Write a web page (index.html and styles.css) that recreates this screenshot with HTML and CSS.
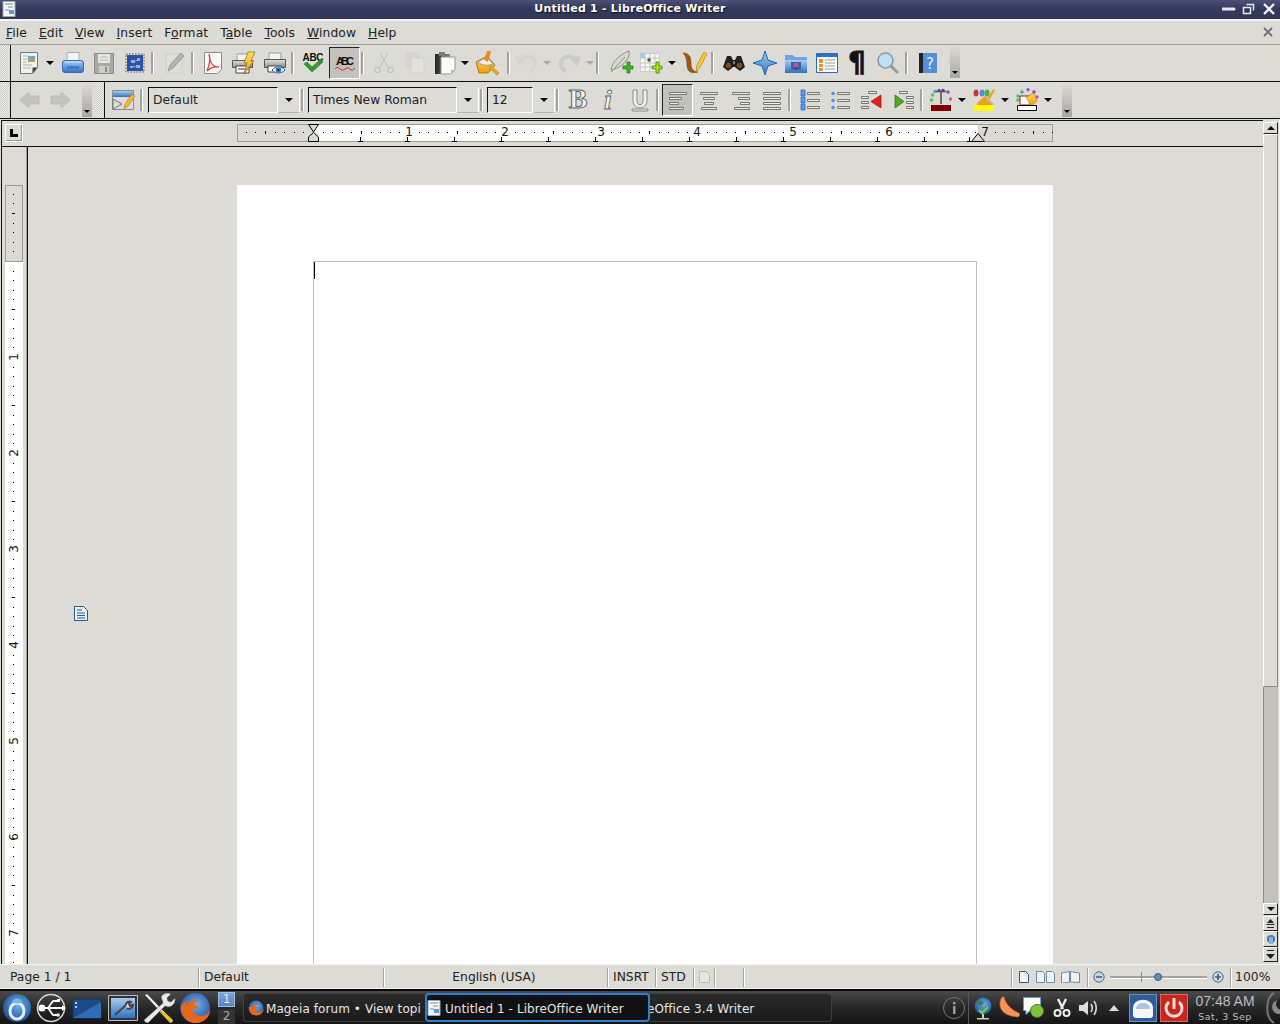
FILE: index.html
```html
<!DOCTYPE html>
<html lang="en">
<head>
<meta charset="utf-8">
<title>Untitled 1 - LibreOffice Writer</title>
<link rel="stylesheet" href="styles.css">
</head>
<body>
<svg class="defs" width="0" height="0" aria-hidden="true">
  <defs>
    <linearGradient id="gBlue" x1="0" y1="0" x2="0" y2="1"><stop offset="0" stop-color="#a9cdf0"/><stop offset="1" stop-color="#2f72c4"/></linearGradient>
    <linearGradient id="gGrey" x1="0" y1="0" x2="0" y2="1"><stop offset="0" stop-color="#e4e4e0"/><stop offset="1" stop-color="#8d8d88"/></linearGradient>
    <linearGradient id="gDark" x1="0" y1="0" x2="1" y2="0"><stop offset="0" stop-color="#222"/><stop offset="1" stop-color="#888"/></linearGradient>
    <linearGradient id="gYel" x1="0" y1="0" x2="0" y2="1"><stop offset="0" stop-color="#ffe14d"/><stop offset="1" stop-color="#f09a10"/></linearGradient>
    <radialGradient id="gFox" cx=".55" cy=".4" r=".6"><stop offset="0" stop-color="#6fb3e8"/><stop offset="1" stop-color="#1d4f9c"/></radialGradient>
    <path id="inch" d="M10 8h1v1h-1zM19 8h1v1h-1zM29 8h1v1h-1zM38 8h1v1h-1zM48 7h1v3h-1zM58 8h1v1h-1zM67 8h1v1h-1zM77 8h1v1h-1zM86 8h1v1h-1z"/>
    <path id="tab" d="M2 13h1v4h2v1H0v-1h2z"/>
    <path id="vinch" d="M8 10h1v1H8zM8 19h1v1H8zM8 29h1v1H8zM8 38h1v1H8zM7 48h3v1H7zM8 58h1v1H8zM8 67h1v1H8zM8 77h1v1H8zM8 86h1v1H8z"/>
  </defs>
</svg>

<header class="title">
  <svg class="title-doc" width="14" height="16" viewBox="0 0 14 16"><path d="M1 .5h12v15H1z" fill="#f4f6f8" stroke="#9aa"/><path d="M3 3h8M6 6h5M3 9h4" stroke="#789"/><path d="M7 9h5v4H7z" fill="#5a9bd8"/></svg>
  <span class="title-text">Untitled 1 - LibreOffice Writer</span>
  <div class="title-btns">
    <svg width="14" height="14" viewBox="0 0 14 14"><path d="M1 7h11" stroke="#e8e8ec" stroke-width="3" stroke-linecap="round"/></svg>
    <svg width="14" height="14" viewBox="0 0 14 14"><path d="M4.500 2.500h7v6M1.500 5.500h7v6h-7z" fill="none" stroke="#e8e8ec" stroke-width="1.500"/></svg>
    <svg width="14" height="14" viewBox="0 0 14 14"><path d="M2 2l10 10M12 2L2 12" stroke="#f2f2f4" stroke-width="2.400"/></svg>
  </div>
</header>

<nav class="menu">
  <span><u>F</u>ile</span><span><u>E</u>dit</span><span><u>V</u>iew</span><span><u>I</u>nsert</span><span>F<u>o</u>rmat</span><span>T<u>a</u>ble</span><span><u>T</u>ools</span><span><u>W</u>indow</span><span><u>H</u>elp</span>
  <svg class="menu-x" width="12" height="12" viewBox="0 0 12 12"><path d="M2 2l8 8M10 2l-8 8" stroke="#66707c" stroke-width="1.800"/></svg>
</nav>

<section class="bar bar1">
  <div class="grip"></div>
  <div class="bar-line"></div>
  <div class="tools pad5">
    <button class="b w26"><svg width="24" height="24" viewBox="0 0 24 24"><path d="M3.500 1.500h17v15l-5 6h-12z" fill="#f3f3ee" stroke="#777"/><path d="M6 5h5M6 8h4M6 11h3M6 14h9M6 17h8" stroke="#aab"/><path d="M11 5h7v6h-7z" fill="#6fa8dc"/><path d="M11 9h7v2h-7z" fill="#c9a227"/><path d="M15.500 22.500v-6h5z" fill="#444"/></svg></button>
    <button class="b w15"><i class="drop"></i></button>
    <button class="b w31"><svg width="24" height="24" viewBox="0 0 24 24"><path d="M6 1.500h12v9H6z" fill="#f6f6f6" stroke="#aaa"/><rect x="1.500" y="9.500" width="21" height="12" rx="2.500" fill="url(#gBlue)" stroke="#2d6cb8"/><path d="M4 11h16" stroke="#cfe3f7"/><path d="M6 15h12v3H6z" fill="#3a7ccb"/></svg></button>
    <button class="b w31"><svg width="24" height="24" viewBox="0 0 24 24"><path d="M2.500 2.500h19v20h-19z" fill="#a9a9a4" stroke="#8e8e89"/><path d="M6 3h12v9H6z" fill="#e5e5e1"/><path d="M8 6h8M8 9h8" stroke="#bbb"/><path d="M7 15h10v7H7z" fill="#cfcfca"/><path d="M13 16h2v5h-2z" fill="#8e8e89"/></svg></button>
    <button class="b w31"><svg width="24" height="24" viewBox="0 0 24 24"><path d="M3.500 3.500h17v17h-17z" fill="#2d51a6" stroke="#ddd"/><path d="M3 3h18v18H3z" fill="none" stroke="#555" stroke-dasharray="1.500 1.500"/><path d="M8 9h4v3H8zM14 7h3v3h-3zM13 14h4v3h-4zM7 15h3v2H7z" fill="#8db0e4"/><path d="M10 12l4-3M10 15l3 1" stroke="#8db0e4"/></svg></button>
    <i class="sep"></i>
    <button class="b w32"><svg width="24" height="24" viewBox="0 0 24 24"><path d="M4 3h16v19H4z" fill="#dfdfda" stroke="#cfcfca"/><path d="M6 20l2-6L19 2l3 3L11 17z" fill="#b5b5b0" stroke="#9d9d98"/></svg></button>
    <i class="sep w7"></i>
    <button class="b w31"><svg width="24" height="24" viewBox="0 0 24 24"><path d="M3.500 1.500h17v17l-4 4h-13z" fill="#fafafa" stroke="#8a8a8a"/><path d="M8 3c1 8 3 13 10 13-6-1-10 2-12 4 2-5 4-12 2-17z" fill="none" stroke="#e03c3c" stroke-width="1.300"/></svg></button>
    <button class="b w31"><svg width="24" height="24" viewBox="0 0 24 24"><path d="M5 3h12v7H5z" fill="#f2f2f2" stroke="#999"/><path d="M.5 9.500h20v7H.5z" fill="url(#gGrey)" stroke="#555"/><path d="M4 15h13v7H4z" fill="#fff" stroke="#444"/><path d="M6 18h10" stroke="#333"/><path d="M16 1h7l-4 9h3L12 23l3-11h-3z" fill="url(#gYel)" stroke="#7a5a14" stroke-width=".6"/></svg></button>
    <button class="b w31"><svg width="24" height="24" viewBox="0 0 24 24"><path d="M6 2h12v7H6z" fill="#f2f2f2" stroke="#999"/><path d="M1.500 8.500h21v8h-21z" fill="url(#gGrey)" stroke="#555"/><path d="M5 15h14v6H5z" fill="#fff" stroke="#444"/><path d="M9 19c3-4 10-4 13 0-3 4-10 4-13 0z" fill="#e8f0f8" stroke="#35699d"/><circle cx="15.500" cy="19" r="2.800" fill="#2f7fc1"/><circle cx="15.500" cy="19" r="1.100" fill="#123"/></svg></button>
    <i class="sep w7"></i>
    <button class="b w32"><svg width="24" height="24" viewBox="0 0 24 24"><text x="12" y="10" class="abc" textLength="21">ABC</text><path d="M3 13l3-2 5 5 9-8 2 3-11 10z" fill="#2f9a2f" stroke="#1c6a1c" stroke-width=".5"/></svg></button>
    <button class="b w31 on"><svg width="24" height="24" viewBox="0 0 24 24"><text x="12" y="14" class="abc2" textLength="18">ABC</text><path d="M2 18c2-2 3-2 5 0s3 1 5 0 3-2 5 0 3 1 5-1" fill="none" stroke="#d01818"/></svg></button>
    <i class="sep"></i>
    <button class="b w31"><svg width="24" height="24" viewBox="0 0 24 24"><path d="M16 2L8 16M8 2l8 14" stroke="#c4c4be" stroke-width="1.200"/><circle cx="5.500" cy="19" r="2.800" fill="none" stroke="#b8b8b2"/><circle cx="18.500" cy="19" r="2.800" fill="none" stroke="#b8b8b2"/></svg></button>
    <button class="b w31"><svg width="24" height="24" viewBox="0 0 24 24"><path d="M3 2h13v15H3z" fill="#d6d5d0" stroke="#cfcec9"/><path d="M8 7h13v15H8z" fill="#e2e1dc" stroke="#d2d1cc"/></svg></button>
    <button class="b w30"><svg width="24" height="24" viewBox="0 0 24 24"><path d="M2 3h15v20H2z" fill="url(#gDark)"/><path d="M6 1h6v4H6z" fill="#777"/><path d="M8 6h14v13l-4 4H8z" fill="#fbfbf8" stroke="#999"/><path d="M18 23v-4h4z" fill="#bbb"/></svg></button>
    <button class="b w10"><i class="drop"></i></button>
    <button class="b w36"><svg width="24" height="24" viewBox="0 0 24 24"><path d="M0 11l11-6 8 9-7 8H3z" fill="url(#gYel)" stroke="#b87a10"/><path d="M2 11l9-5 6 7c-5 2-11 2-15-2z" fill="#f1f1f1" stroke="#999"/><path d="M8 9l3-9h4l-3 11z" fill="#f08a1d"/><path d="M15 15l8 7-2 2-8-7z" fill="#f2a81d" stroke="#a66d10" stroke-width=".5"/></svg></button>
    <i class="sep w7"></i>
    <button class="b w26"><svg width="24" height="24" viewBox="0 0 24 24"><path d="M6 9c6-7 15-3 15 4 0 3-2 6-5 7" fill="none" stroke="#d5d4cf" stroke-width="4"/><path d="M1 5l11 2-7 9z" fill="#d5d4cf"/></svg></button>
    <button class="b w16"><i class="drop pale"></i></button>
    <button class="b w30"><svg width="24" height="24" viewBox="0 0 24 24"><path d="M18 9C12 2 3 6 3 13c0 3 2 6 5 7" fill="none" stroke="#cbcac5" stroke-width="4"/><path d="M23 5l-11 2 7 9z" fill="#cbcac5"/></svg></button>
    <button class="b w10"><i class="drop pale"></i></button>
    <i class="sep w9"></i>
    <button class="b w34"><svg width="24" height="24" viewBox="0 0 24 24"><path d="M2 19C3 10 12 3 20 0c1 7-4 14-14 18z" fill="#d8d8d3" stroke="#8f8f8a"/><path d="M2 21L16 6" stroke="#8f8f8a"/><path d="M14 15h4v-4h3v4h3v3h-3v4h-3v-4h-4z" fill="#3cb521" stroke="#1d7a10" stroke-width=".7"/></svg></button>
    <button class="b w26"><svg width="24" height="24" viewBox="0 0 24 24"><path d="M1.500 2.500h19v18h-19z" fill="#f7f7f3" stroke="#ccc"/><path d="M6 2v18M11 2v18M16 2v18M1 7h20M1 12h20M1 16h20" stroke="#c4c4c0"/><path d="M1 2h5v5H1z" fill="#a6c5ef"/><path d="M8 9h4M10 7v4" stroke="#222"/><path d="M13 15h4v-4h3v4h3v3h-3v4h-3v-4h-4z" fill="#9fe01c" stroke="#2f7a10" stroke-width=".7"/></svg></button>
    <button class="b w16"><i class="drop"></i></button>
    <button class="b w30"><svg width="24" height="24" viewBox="0 0 24 24"><path d="M0 2c7 0 8 5 8 11 0 5 3 8 7 8-6 2-11 0-11-7 0-5-1-9-4-12z" fill="#a65314" stroke="#6d3509" stroke-width=".5"/><path d="M13 21l1-7 7-13 3 2-7 13z" fill="#f7c93a" stroke="#b58613" stroke-width=".7"/></svg></button>
    <i class="sep"></i>
    <button class="b w32"><svg width="24" height="24" viewBox="0 0 24 24"><path d="M5 5h4l2 4h2l2-4h4l4 11-5 4-5-4h-2l-5 4-5-4z" fill="#222"/><circle cx="6.500" cy="14.500" r="3.500" fill="#7a4a20" stroke="#111"/><circle cx="17.500" cy="14.500" r="3.500" fill="#7a4a20" stroke="#111"/><path d="M11 10h2v3h-2z" fill="#777"/></svg></button>
    <button class="b w30"><svg width="24" height="24" viewBox="0 0 24 24"><path d="M12 0l3 9 9 3-9 3-3 9-3-9-9-3 9-3z" fill="url(#gBlue)" stroke="#2368b8"/></svg></button>
    <button class="b w32"><svg width="24" height="24" viewBox="0 0 24 24"><path d="M1 4h8l2 2h12v16H1z" fill="#6ea6e2"/><path d="M1 9h22v13H1z" fill="url(#gBlue)"/><path d="M7 11h10v8H7z" fill="#3b5ea8"/><circle cx="12" cy="14" r="2.500" fill="#c04fa0"/><path d="M12 16v3" stroke="#5a2a10"/></svg></button>
    <button class="b w30"><svg width="24" height="24" viewBox="0 0 24 24"><path d="M1.500 2.500h21v19h-21z" fill="#fbfbfb" stroke="#2668bf"/><path d="M2 3h20v3H2z" fill="#2d73cc"/><path d="M4 8h4v4H4zM4 13h4v3H4zM4 17h4v3H4z" fill="#ef8c22"/><path d="M10 9h10M10 12h10M10 15h10M10 18h10" stroke="#999"/></svg></button>
    <button class="b w30"><svg width="24" height="24" viewBox="0 0 24 24"><text x="12" y="21" class="pil">¶</text></svg></button>
    <button class="b w32"><svg width="24" height="24" viewBox="0 0 24 24"><circle cx="9.500" cy="9.500" r="7.500" fill="#bfe0f4" stroke="#8a9aa4" stroke-width="1.600"/><path d="M15 15l7 7" stroke="#9a9a94" stroke-width="3"/></svg></button>
    <i class="sep w9"></i>
    <button class="b w30"><svg width="24" height="24" viewBox="0 0 24 24"><path d="M3 2h18v20H3z" fill="#4f8fdb"/><path d="M3 2h4v20H3z" fill="#222"/><text x="14" y="18" class="qm">?</text></svg></button>
    <div class="over"><i class="drop"></i></div>
  </div>
</section>

<section class="bar bar2">
  <div class="grip"></div>
  <div class="bar-line"></div>
  <div class="nav-tools">
    <button class="b w30 ml4"><svg width="24" height="24" viewBox="0 0 24 24"><path d="M2 12l9-8v4h10v8H11v4z" fill="#c4c4be" stroke="#bbbbb5"/></svg></button>
    <button class="b w30"><svg width="24" height="24" viewBox="0 0 24 24"><path d="M22 12l-9-8v4H3v8h10v4z" fill="#c4c4be" stroke="#bbbbb5"/></svg></button>
    <div class="over tall"><i class="drop"></i></div>
  </div>
  <div class="grip"></div>
  <div class="bar-line"></div>
  <div class="tools pad2">
    <button class="b w32"><svg width="24" height="24" viewBox="0 0 24 24"><path d="M1.500 2.500h21v19h-21z" fill="#dcdcd8" stroke="#8a8a88"/><path d="M2 3h20v6H2z" fill="url(#gBlue)"/><path d="M2 11l9 5-9 5zM13 18h4" stroke="#777" fill="none"/><path d="M13 21l1-5 7-10 3 2-7 10z" fill="#f5b921" stroke="#a67a10" stroke-width=".6"/></svg></button>
    <i class="sep w9"></i>
    <div class="combo w152"><span class="field">Default</span><span class="arrow"><i class="drop"></i></span></div>
    <i class="sep"></i>
    <div class="combo w171"><span class="field flat">Times New Roman</span><span class="arrow"><i class="drop"></i></span></div>
    <i class="sep"></i>
    <div class="combo w68"><span class="field">12</span><span class="arrow"><i class="drop"></i></span></div>
    <i class="sep w7"></i>
    <button class="b w31"><svg width="24" height="24" viewBox="0 0 24 24"><text x="12" y="20" class="fmt-b">B</text></svg></button>
    <button class="b w31"><svg width="24" height="24" viewBox="0 0 24 24"><text x="11" y="21" class="fmt-i">i</text></svg></button>
    <button class="b w31"><svg width="24" height="24" viewBox="0 0 24 24"><path d="M5 2h4v11c0 5 6 5 6 0V2h4v11c0 9-14 9-14 0zM4 21h16v2H4z" fill="#eee" stroke="#8a8a86"/></svg></button>
    <i class="sep w7"></i>
    <button class="b w31 on"><svg width="24" height="24" viewBox="0 0 24 24"><path class="ln" d="M3.500 4.500h17v2h-17zM3.500 9.500h12v2h-12zM3.500 14.500h9v2h-9zM3.500 19.500h14v2h-14z"/></svg></button>
    <button class="b w32"><svg width="24" height="24" viewBox="0 0 24 24"><path class="ln" d="M3.500 4.500h17v2h-17zM6.500 9.500h11v2h-11zM7.500 14.500h9v2h-9zM4.500 19.500h15v2h-15z"/></svg></button>
    <button class="b w32"><svg width="24" height="24" viewBox="0 0 24 24"><path class="ln" d="M3.500 4.500h17v2h-17zM9.500 9.500h11v2h-11zM11.500 14.500h9v2h-9zM5.500 19.500h15v2h-15z"/></svg></button>
    <button class="b w30"><svg width="24" height="24" viewBox="0 0 24 24"><path class="ln" d="M3.500 4.500h17v2h-17zM3.500 9.500h17v2h-17zM3.500 14.500h17v2h-17zM3.500 19.500h17v2h-17z"/></svg></button>
    <i class="sep w7"></i>
    <button class="b w31"><svg width="24" height="24" viewBox="0 0 24 24"><path class="ln" d="M9.500 4.500h12v2h-12zM9.500 11.500h12v2h-12zM9.500 18.500h12v2h-12z"/><path d="M3 2h4v6H3zM3 9h4v6H3zM3 16h4v6H3z" fill="#5a9ae8" stroke="#2a6ec6" stroke-width=".8"/></svg></button>
    <button class="b w31"><svg width="24" height="24" viewBox="0 0 24 24"><path class="ln" d="M8.500 4.500h12v2h-12zM8.500 11.500h12v2h-12zM8.500 18.500h12v2h-12z"/><circle cx="4" cy="5.500" r="1.800" fill="#4a90e8"/><circle cx="4" cy="12.500" r="1.800" fill="#4a90e8"/><circle cx="4" cy="19.500" r="1.800" fill="#4a90e8"/></svg></button>
    <button class="b w32"><svg width="24" height="24" viewBox="0 0 24 24"><path class="ln" d="M8.500 3.500h8v2h-8zM1.500 8.500h7v2h-7zM1.500 13.500h7v2h-7zM1.500 18.500h7v2h-7z"/><path d="M21 7v13l-10-6.500z" fill="#e42020" stroke="#901010" stroke-width=".7"/></svg></button>
    <button class="b w31"><svg width="24" height="24" viewBox="0 0 24 24"><path class="ln" d="M7.500 3.500h8v2h-8zM14.500 8.500h7v2h-7zM14.500 13.500h7v2h-7zM14.500 18.500h7v2h-7z"/><path d="M3 7v13l9-6.500z" fill="#54a81e" stroke="#2d6b0c" stroke-width=".7"/></svg></button>
    <i class="sep w7"></i>
    <button class="b w30"><svg width="24" height="24" viewBox="0 0 24 24"><circle cx="2.500" cy="12" r="1.700" fill="#48c848"/><circle cx="3.500" cy="7" r="1.700" fill="#48b888"/><circle cx="6" cy="3.500" r="1.700" fill="#38b0b0"/><circle cx="10" cy="2.500" r="1.700" fill="#3858c8"/><circle cx="14" cy="2.500" r="1.700" fill="#5838c8"/><circle cx="19" cy="4" r="1.700" fill="#a038c0"/><circle cx="21.500" cy="11" r="1.700" fill="#e050a0"/><path d="M7 3.500h10M12 3v13" stroke="#555" stroke-width="1.600"/><path d="M2 17h20v6H2z" fill="#800000"/></svg></button>
    <button class="b w12"><i class="drop"></i></button>
    <button class="b w32"><svg width="24" height="24" viewBox="0 0 24 24"><ellipse cx="4" cy="5" rx="2.500" ry="3.500" fill="#d83030"/><ellipse cx="10" cy="5" rx="2.500" ry="3.500" fill="#4a8ee0"/><ellipse cx="15" cy="5" rx="2.500" ry="3.500" fill="#48b048"/><path d="M21 1l2 1-6 11-3-1z" fill="#f0a820"/><path d="M6 14l7-6 8 8v3H4z" fill="#f0a020"/><path d="M15 10l7 7" stroke="#bbb" stroke-width="2"/><path d="M2 17h20v6H2z" fill="#ffff00"/></svg></button>
    <button class="b w10"><i class="drop"></i></button>
    <button class="b w34"><svg width="24" height="24" viewBox="0 0 24 24"><circle cx="3" cy="8" r="1.700" fill="#48c848"/><circle cx="3" cy="12" r="1.700" fill="#48c848"/><circle cx="7" cy="4" r="1.700" fill="#30b0b0"/><circle cx="13" cy="1.800" r="1.700" fill="#5878d0"/><circle cx="19" cy="4" r="1.700" fill="#a038c0"/><circle cx="22" cy="9" r="1.700" fill="#d050b0"/><path d="M5 8h10v9H5z" fill="#fff" stroke="#a01010"/><path d="M3 19c4 2 8 3 10 3" stroke="#b01010" stroke-width="2"/><path d="M11 9l8-4 3 8-6 5z" fill="url(#gYel)" stroke="#a67a10" stroke-width=".6"/><path d="M2.500 17.500h19v5h-19z" fill="#fff" stroke="#000"/></svg></button>
    <button class="b w8"><i class="drop"></i></button>
    <div class="over tall sm"><i class="drop"></i></div>
  </div>
</section>

<main class="work">
  <div class="left">
    <div class="rrow">
      <div class="corner"><svg width="10" height="10" viewBox="0 0 10 10"><path d="M1 1h3v5h5v3H1z" fill="#000"/></svg></div>
      <svg class="hruler" width="816" height="18" viewBox="0 0 816 18">
        <rect x=".5" y=".5" width="815" height="17" fill="#dbdad5" stroke="#9c9b96"/>
        <rect x="77" y="1" width="664" height="16" fill="#fff"/>
        <use href="#inch" x="-20"/>
        <use href="#inch" x="76"/><use href="#inch" x="172"/><use href="#inch" x="268"/><use href="#inch" x="364"/><use href="#inch" x="460"/><use href="#inch" x="556"/><use href="#inch" x="652"/><use href="#inch" x="748"/>
        <text x="172" y="12" class="rnum">1</text><text x="268" y="12" class="rnum">2</text><text x="364" y="12" class="rnum">3</text><text x="460" y="12" class="rnum">4</text><text x="556" y="12" class="rnum">5</text><text x="652" y="12" class="rnum">6</text><text x="748" y="12" class="rnum">7</text>
        <use href="#tab" x="121"/><use href="#tab" x="168"/><use href="#tab" x="215"/><use href="#tab" x="262"/><use href="#tab" x="309"/><use href="#tab" x="356"/><use href="#tab" x="403"/><use href="#tab" x="450"/><use href="#tab" x="497"/><use href="#tab" x="544"/><use href="#tab" x="591"/><use href="#tab" x="638"/><use href="#tab" x="685"/><use href="#tab" x="730"/>
        <path d="M71.500 .5h10l-5 7.500zM76.500 8.500l5 4.500v4.500h-10V13z" fill="#dbdad5" stroke="#000"/>
        <path d="M734.500 17.500l6.500-8 6.500 8z" fill="#dbdad5" stroke="#000"/>
      </svg>
    </div>
    <div class="lower">
      <div class="vcol">
        <svg class="vruler" width="18" height="779" viewBox="0 0 18 779">
          <rect x="0" y="0" width="18" height="779" fill="#fff"/>
          <rect x=".5" y=".5" width="17" height="76" fill="#dbdad5" stroke="#9c9b96"/>
          <use href="#vinch" y="-20"/><use href="#vinch" y="76"/><use href="#vinch" y="172"/><use href="#vinch" y="268"/><use href="#vinch" y="364"/><use href="#vinch" y="460"/><use href="#vinch" y="556"/><use href="#vinch" y="652"/><use href="#vinch" y="748"/>
          <text transform="translate(13 172) rotate(-90)" class="rnum">1</text>
          <text transform="translate(13 268) rotate(-90)" class="rnum">2</text>
          <text transform="translate(13 364) rotate(-90)" class="rnum">3</text>
          <text transform="translate(13 460) rotate(-90)" class="rnum">4</text>
          <text transform="translate(13 556) rotate(-90)" class="rnum">5</text>
          <text transform="translate(13 652) rotate(-90)" class="rnum">6</text>
          <text transform="translate(13 748) rotate(-90)" class="rnum">7</text>
        </svg>
      </div>
      <div class="doc">
        <div class="page">
          <div class="margins"><i class="cursor"></i></div>
        </div>
        <svg class="navicon" width="16" height="16" viewBox="0 0 16 16"><path d="M1.500 .5h9l4 4v10h-13z" fill="#e8f1f8" stroke="#1f5f8f"/><path d="M4 4h5M4 7h8M4 9.500h8M4 12h8" stroke="#1f5f8f"/></svg>
      </div>
    </div>
  </div>
  <aside class="sbar">
    <div class="sb-btn top"><i class="up"></i></div>
    <div class="thumb"></div>
    <div class="trough"></div>
    <div class="sb-btn"><i class="down"></i></div>
    <div class="sb-nav"><svg width="9" height="9" viewBox="0 0 9 9"><path d="M4.500 0l3.500 4H1zM0 5h9L8 6H1zM1 8h7v1H1z" fill="#222"/></svg></div>
    <div class="sb-nav tall16"><svg width="10" height="10" viewBox="0 0 10 10"><circle cx="5" cy="5" r="4" fill="#3f78b0"/><path d="M3 3h4v7H3z" fill="#8fb4d8"/></svg></div>
    <div class="sb-nav"><svg width="9" height="9" viewBox="0 0 9 9"><path d="M1 0h7v1H1zM0 4h9L4.500 9z" fill="#222"/></svg></div>
  </aside>
</main>

<footer class="status">
  <span class="cell w198 first">Page 1 / 1</span>
  <span class="cell w185">Default</span>
  <span class="cell w224 center">English (USA)</span>
  <span class="cell w48">INSRT</span>
  <span class="cell w38">STD</span>
  <span class="cell w21"><svg width="11" height="12" viewBox="0 0 11 12"><path d="M.5 .5h7l3 3v8H.5z" fill="#e8e8e3" stroke="#bcbcb6"/></svg></span>
  <span class="cell w29"></span>
  <span class="cell w268"></span>
  <span class="cell w76 views">
    <svg width="13" height="12" viewBox="0 0 13 12"><path d="M2.500 .5h6l3 3v8h-9z" fill="#eef4fa" stroke="#1f5a92"/></svg>
    <svg width="19" height="12" viewBox="0 0 19 12"><path d="M.5 .5h6l2 2v9h-8zM10.500 .5h6l2 2v9h-8z" fill="#eef2f6" stroke="#6f8ba6"/></svg>
    <svg width="19" height="12" viewBox="0 0 19 12"><path d="M.5 2l8-1.500v11l-8 .5zM9.500 .5l9 1.500v9.500l-9-.5z" fill="#eef2f6" stroke="#6f8ba6"/></svg>
  </span>
  <span class="cell w143 zoom">
    <svg width="12" height="12" viewBox="0 0 12 12"><circle cx="6" cy="6" r="5.200" fill="#c6d6e4" stroke="#3f6f98"/><path d="M3 6h6" stroke="#123c60" stroke-width="1.200"/></svg>
    <span class="slider"><i class="mid"></i><i class="knob"></i></span>
    <svg width="12" height="12" viewBox="0 0 12 12"><circle cx="6" cy="6" r="5.200" fill="#c6d6e4" stroke="#3f6f98"/><path d="M3 6h6M6 3v6" stroke="#123c60" stroke-width="1.200"/></svg>
  </span>
  <span class="cell pct">100%</span>
</footer>

<footer class="task">
  <div class="lz w34"><svg width="30" height="30" viewBox="0 0 30 30"><circle cx="15" cy="15" r="14" fill="url(#gFox)"/><ellipse cx="15" cy="18" rx="7" ry="8" fill="none" stroke="#e4eef8" stroke-width="3"/><path d="M10 9c2-5 8-5 10 0-3 2-7 2-10 0z" fill="#7fb4e6"/></svg></div>
  <div class="lz w34"><svg width="30" height="30" viewBox="0 0 30 30"><circle cx="15" cy="15" r="13.500" fill="none" stroke="#d8d8d8" stroke-width="1.500"/><path d="M3 15h24M12 15l5-7h5M12 15l5 7h4" stroke="#fff" stroke-width="1.800" fill="none"/><circle cx="6" cy="15" r="3.500" fill="#fff"/><path d="M26 12l4 3-4 3z" fill="#fff"/><path d="M21 6h3v3h-3z" fill="#fff"/><circle cx="22" cy="22" r="1.800" fill="#fff"/></svg></div>
  <div class="lz w37"><svg width="30" height="24" viewBox="0 0 30 24"><path d="M1 3h28v19H1z" fill="#1e4a86" stroke="#16345c"/><path d="M1 22L29 6v16z" fill="#2f6cb6"/><path d="M3 6h2v2H3zM3 10h2v2H3z" fill="#bcd"/></svg></div>
  <div class="lz w35"><svg width="30" height="26" viewBox="0 0 30 26"><path d="M.5 .5h29v25H.5z" fill="#333" stroke="#bbb"/><path d="M3 3h24v20H3z" fill="url(#gBlue)"/><path d="M7 20l11-10M18 10c0-3 3-4 5-3l-2 2 1 2 3-1c0 3-4 5-6 3" stroke="#444" stroke-width="2" fill="#ddd"/></svg></div>
  <div class="lz w37"><svg width="32" height="32" viewBox="0 0 32 32"><path d="M2 3l2-1 26 27-2 2z" fill="#eee"/><path d="M19 18l11 10-3 3-10-11z" fill="#f0c020"/><path d="M2 30l-1-2 19-17-2-6c2-4 7-5 10-3l-4 4 1 3 3 1 4-4c1 4-2 9-7 9l-3-1L5 31z" fill="#e8e8e8" stroke="#555" stroke-width=".6"/></svg></div>
  <div class="lz w36"><svg width="32" height="32" viewBox="0 0 32 32"><circle cx="16" cy="16" r="15" fill="url(#gFox)"/><path d="M2 14C1 24 8 31 17 31c8 0 14-6 14-13-2 4-5 6-9 6-5 0-8-3-8-7 2-1 4-1 6 0 0-3-3-4-5-4 0-2 2-4 5-5-6-1-11 2-12 6-1-2-1-4 0-6-3 2-5 4-6 6z" fill="#e8661a"/></svg></div>
  <div class="pager"><span class="pg on">1</span><span class="pg">2</span></div>
  <div class="tasks">
    <div class="tk w182 first-task"><svg width="16" height="16" viewBox="0 0 32 32"><circle cx="16" cy="16" r="15" fill="url(#gFox)"/><path d="M2 14C1 24 8 31 17 31c8 0 14-6 14-13-2 4-5 6-9 6-5 0-8-3-8-7 2-1 4-1 6 0 0-3-3-4-5-4 0-2 2-4 5-5-6-1-11 2-12 6z" fill="#e8661a"/></svg><span>Mageia forum • View topi</span></div>
    <div class="tk act"><svg width="14" height="16" viewBox="0 0 14 16"><path d="M1 .5h12v15H1z" fill="#f4f6f8" stroke="#9aa"/><path d="M3 3h8M6 6h5M3 9h4" stroke="#789"/><path d="M7 9h5v4H7z" fill="#5a9bd8"/></svg><span>Untitled 1 - LibreOffice Writer</span></div>
    <div class="tk w182 last"><span>eOffice 3.4 Writer</span></div>
  </div>
  <div class="tray">
    <div class="lz w28"><svg width="24" height="24" viewBox="0 0 24 24"><circle cx="12" cy="12" r="10.500" fill="none" stroke="#777"/><path d="M11 10h2.500v8H11zM11 6h2.500v2.500H11z" fill="#999"/></svg></div>
    <div class="lz w28 bl"><svg width="24" height="24" viewBox="0 0 24 24"><circle cx="12" cy="10" r="8.500" fill="url(#gFox)"/><path d="M7 5c3-1 5 0 6 2l-3 3-3-1zM14 11l4 1-2 4z" fill="#3c7f48"/><path d="M8 14l3 3 6-6" stroke="#5ee03c" stroke-width="2.200" fill="none"/><path d="M6 22h12v1.500H6zM11 18h2v4h-2z" fill="#ccc"/></svg></div>
    <div class="lz w24"><svg width="24" height="24" viewBox="0 0 24 24"><path d="M6 1C1 9 4 20 22 21c2-1 2-3 1-4C16 14 10 9 8 1z" fill="#f4945a" stroke="#b85a28" stroke-width=".6"/></svg></div>
    <div class="lz w28"><svg width="24" height="24" viewBox="0 0 24 24"><path d="M1.500 1.500h17v13H8l-4 4v-4H1.500z" fill="#fff" stroke="#6a9ed6"/><circle cx="15" cy="15" r="6.500" fill="#7cc43c" stroke="#3d7a18"/></svg></div>
    <div class="lz w28"><svg width="18" height="20" viewBox="0 0 18 20"><path d="M5 1l5 10M13 1L8 11" stroke="#eee" stroke-width="2.400"/><circle cx="4.500" cy="15" r="3" fill="none" stroke="#eee" stroke-width="2"/><circle cx="13.500" cy="15" r="3" fill="none" stroke="#eee" stroke-width="2"/></svg></div>
    <div class="lz w24"><svg width="20" height="20" viewBox="0 0 20 20"><path d="M1 7h4l5-4v14l-5-4H1z" fill="#ddd"/><path d="M13 6c1.500 2.500 1.500 5.500 0 8M16 3c3 4 3 10 0 14" stroke="#ddd" stroke-width="1.600" fill="none"/></svg></div>
    <div class="lz w28"><svg width="12" height="8" viewBox="0 0 12 8"><path d="M6 1l5 6H1z" fill="#ddd"/></svg></div>
    <div class="lz w30"><svg width="28" height="28" viewBox="0 0 28 28"><rect x=".5" y=".5" width="27" height="27" fill="#2f5c9a" stroke="#6a8fc0"/><path d="M4 14C4 3 24 3 24 14v7c0 2-1 3-3 3H7c-2 0-3-1-3-3z" fill="#f6f6f6"/><path d="M7 15c0-8 14-8 14 0z" fill="#a8c4e4"/></svg></div>
    <div class="lz w32"><svg width="28" height="28" viewBox="0 0 28 28"><rect x=".5" y=".5" width="27" height="27" fill="#c5281c" stroke="#e06a60"/><path d="M9 8a8 8 0 1 0 10 0" fill="none" stroke="#f6d8d0" stroke-width="3"/><path d="M12.500 4h3v11h-3z" fill="#f6d8d0"/></svg></div>
    <div class="clock"><span class="time">07:48 AM</span><span class="date">Sat, 3 Sep</span></div>
    <div class="lz w20"><svg width="20" height="34" viewBox="0 0 20 34"><path d="M14 2C6 6 4 26 14 32" fill="none" stroke="#777" stroke-width="2"/><circle cx="19" cy="16" r="7" fill="#8a8a8a"/><circle cx="22" cy="13" r="6" fill="#222"/></svg></div>
  </div>
</footer>
</body>
</html>
```
FILE: styles.css
```css
* { box-sizing: border-box; }
html, body { margin: 0; padding: 0; }
body {
  width: 1280px; height: 1024px; overflow: hidden;
  display: flex; flex-direction: column;
  background: #dcdbd6; color: #000;
  font: 12.3px "DejaVu Sans", sans-serif;
  position: relative;
}
.defs { position: absolute; }
button { all: unset; box-sizing: border-box; }
i { display: block; font-style: normal; }

.title {
  height: 21px; flex: none; position: relative;
  background: linear-gradient(#4a5079, #343a5c 45%, #2f3554);
  border-bottom: 2px solid #f4f4f4;
  color: #fff; font-weight: bold; font-size: 11px;
  display: flex; align-items: center; justify-content: center;
  padding: 0 20px 3px 0;
}
.title-text { text-shadow: 1px 1px 1px #111; letter-spacing: .2px; }
.title-doc { position: absolute; left: 2px; top: 1px; }
.title-btns { position: absolute; right: 4px; top: 2px; display: flex; gap: 6px; }

.menu {
  height: 24px; flex: none; display: flex; align-items: center; gap: 12px;
  padding-left: 6px; border-bottom: 1px solid #a09f99; position: relative;
  color: #222; letter-spacing: .08px;
}
.menu-x { position: absolute; right: 6px; top: 5px; }

.bar {
  height: 37px; flex: none; display: flex; align-items: stretch;
  border-bottom: 1px solid #111;
}
.grip {
  width: 9px; margin-left: 1px; flex: none;
  background: repeating-conic-gradient(#c9c8c3 0 25%, #f2f1ec 0 50%) 0 0 / 2px 2px;
}
.bar-line { width: 1px; background: #111; flex: none; }
.tools { display: flex; align-items: center; flex: 1; min-width: 0; }
.pad5 { padding-left: 5px; }
.pad2 { padding-left: 2px; }
.nav-tools { width: 83px; flex: none; display: flex; align-items: center; }
.ml4 { margin-left: 4px; }

.b { height: 30px; display: flex; align-items: center; justify-content: center; flex: none; }
.b svg { display: block; overflow: visible; }
.on { background: #c2c1bb; border: 1px solid; border-color: #222 #fff #fff #222; }
.b.on { height: 32px; }
.sep { width: 8px; height: 22px; flex: none; position: relative; }
.sep::before { content: ""; position: absolute; left: 1px; top: 0; bottom: 0; width: 3px; background: linear-gradient(90deg, #a3a29c 66%, #fff 66%); }
.drop { width: 0; height: 0; border: 4px solid transparent; border-top-color: #000; border-bottom: 0; }
.drop.pale { border-top-color: #aaa9a4; }
.over {
  width: 10px; height: 33px; margin-left: 7px; flex: none;
  background: linear-gradient(#dcdbd6, #a8a7a2);
  display: flex; align-items: flex-end; justify-content: center; padding-bottom: 4px;
  align-self: flex-start;
}
.over .drop { border-width: 3px; border-top-color: #000; border-bottom: 0; }
.over.tall { height: 34px; margin-left: 7px; align-self: center; }
.over.sm { margin-left: 10px; }

.combo { display: flex; height: 26px; flex: none; }
.field {
  flex: 1; border: 1px solid; border-color: #111 #fff #fff #111;
  padding: 3px 0 0 4px; line-height: 18px; color: #222;
  background: #dcdbd6;
}
.field.flat { background: #dcdbd6; }
.arrow {
  width: 22px; flex: none; display: flex; align-items: center; justify-content: center;
  border: 1px solid; border-color: #dcdbd6 #fff #b5b4ae #dcdbd6;
  background: #dcdbd6; margin-left: 0;
}
.arrow .drop { border-width: 4px 4px 0; }
.w152 { width: 152px; }
.w171 { width: 171px; }
.w68 { width: 68px; }

.abc { font: bold 10px "Liberation Sans", sans-serif; text-anchor: middle; fill: #111; }
.abc2 { font: bold 11px "Liberation Sans Narrow", "Liberation Sans", sans-serif; text-anchor: middle; fill: #111; }
.pil { font: bold 28px "DejaVu Sans", sans-serif; text-anchor: middle; fill: #111; stroke: #222; stroke-width: .8; }
.qm { font: 15px "DejaVu Sans", sans-serif; text-anchor: middle; fill: #e8f2fb; }
.fmt-b { font: bold 28px "Liberation Serif", serif; text-anchor: middle; fill: #f4f4f2; stroke: #666; stroke-width: 1; }
.fmt-i { font: italic bold 28px "Liberation Serif", serif; text-anchor: middle; fill: #f4f4f2; stroke: #666; stroke-width: .9; }
.ln { fill: #eeeeea; stroke: #77776f; }
.rnum { font: 12px "DejaVu Sans", sans-serif; text-anchor: middle; fill: #111; }

.work { height: 845px; flex: none; display: flex; }
.left { flex: 1; min-width: 0; display: flex; flex-direction: column; border-left: 1px solid #111; margin-left: 1px; margin-top: 1px; }
.rrow {
  height: 27px; flex: none; display: flex; align-items: flex-start;
  border-top: 1px solid #111; border-bottom: 1px solid #111; padding: 3px 0 0 3px;
  gap: 214px;
}
.corner {
  width: 18px; height: 18px; flex: none; border: 1px solid #fff; outline: 0;
  background: #dcdbd6; display: flex; align-items: center; justify-content: center;
  box-shadow: inset -1px -1px 0 #9c9b96;
}
.hruler, .vruler { display: block; flex: none; }
.lower { flex: 1; min-height: 0; display: flex; }
.vcol { width: 25px; flex: none; padding: 38px 0 0 3px; overflow: hidden; border-right: 1px solid #a09f99; }
.doc {
  flex: 1; min-width: 0; position: relative; overflow: hidden;
  border-left: 1px solid #111; padding: 38px 0 0 209px;
  background: #dcdbd6;
}
.page { width: 816px; height: 1056px; background: #fff; padding: 76px; }
.margins { width: 664px; height: 904px; border: 1px solid #c0c0c0; }
.cursor { width: 1px; height: 17px; background: #000; }
.navicon { position: absolute; left: 45px; top: 459px; }

.sbar { width: 17px; flex: none; display: flex; flex-direction: column; padding-top: 3px; border-right: 1px solid #f4f4f4; }
.sb-btn { height: 12px; width: 15px; flex: none; background: #dcdbd6; border: 1px solid; border-color: #fff #222 #222 #fff; display: flex; align-items: center; justify-content: center; }
.up { width: 0; height: 0; border: 4px solid transparent; border-bottom-color: #111; border-top: 0; }
.down { width: 0; height: 0; border: 4px solid transparent; border-top-color: #111; border-bottom: 0; }
.thumb { height: 553px; width: 15px; flex: none; background: #dcdbd6; border: 1px solid; border-color: #fff #8a8984 #8a8984 #fff; }
.trough { flex: 1; width: 15px; background: #c2c1bb; border-left: 1px solid #8a8984; }
.sb-nav { height: 15px; flex: none; width: 15px; background: #dcdbd6; border: 1px solid; border-color: #fff #222 #222 #fff; display: flex; align-items: center; justify-content: center; margin-left: 0; }
.tall16 { height: 16px; }
.sb-nav:nth-child(5) { margin-top: 1px; }
.sb-nav:last-child { margin-bottom: 2px; }

.status {
  height: 25px; flex: none; display: flex; align-items: center;
  border-top: 1px solid #f4f4f0; background: #dcdbd6; color: #222;
  border-bottom: 1px solid #f4f4f0; padding-top: 1px;
}
.cell { height: 19px; flex: none; border-right: 1px solid #a3a29c; box-shadow: 1px 0 0 #fff; padding-left: 5px; line-height: 19px; display: flex; align-items: center; white-space: nowrap; }
.first { padding-left: 10px; }
.center { justify-content: center; padding: 0 3px 0 0; }
.w198 { width: 199px; }
.w185 { width: 185px; }
.w224 { width: 224px; }
.w48 { width: 48px; }
.w38 { width: 38px; }
.w21 { width: 21px; }
.w29 { width: 29px; }
.w268 { width: 268px; }
.w76 { width: 76px; }
.w143 { width: 143px; }
.views { gap: 6px; padding-left: 5px; }
.zoom { gap: 4px; padding-left: 5px; }
.slider { width: 97px; height: 12px; position: relative; margin: 0 1px; }
.slider::before { content: ""; position: absolute; left: 0; right: 0; top: 5px; height: 2px; background: #a3a29c; border-bottom: 1px solid #fff; }
.mid { position: absolute; left: 31px; top: 1px; width: 1px; height: 10px; background: #8a8984; }
.knob { position: absolute; left: 44px; top: 2px; width: 8px; height: 8px; border-radius: 50%; background: #5e8fb4; border: 1px solid #2f5f86; }
.pct { border: 0; box-shadow: none; padding-left: 4px; letter-spacing: .1px; }

.task {
  height: 35px; flex: none; display: flex; align-items: center;
  background: linear-gradient(#4a4a4a, #2a2a2a 45%, #141414);
  border-top: 2px solid #080808;
  color: #e6e6e6; position: relative;
}
.lz { flex: none; height: 33px; display: flex; align-items: center; justify-content: center; }
.lz svg { display: block; overflow: visible; }
.w34 { width: 34px; } .w37 { width: 37px; } .w35 { width: 35px; } .w36 { width: 36px; }
.w28 { width: 28px; } .w24 { width: 24px; } .w30 { width: 30px; } .w32 { width: 32px; } .w20 { width: 20px; }
.w26 { width: 26px; } .w15 { width: 15px; } .w31 { width: 31px; } .w17 { width: 17px; } .w18 { width: 18px; }
.w27 { width: 27px; } .w16 { width: 16px; } .w10 { width: 10px; } .w12 { width: 12px; } .w8 { width: 8px; }
.sep.w7 { width: 7px; } .sep.w9 { width: 9px; }
.bl { border-left: 1px solid #555; }
.pager { width: 17px; margin-left: 5px; flex: none; display: flex; flex-direction: column; gap: 2px; }
.pg { height: 15px; font-size: 12px; line-height: 15px; text-align: center; background: #333; color: #aaa; }
.pg.on { background: linear-gradient(#7fa3d6, #5a82bd); color: #dfe8f4; border: 1px solid #9dbbe4; line-height: 13px; }
.tasks { display: flex; margin-left: 8px; width: 589px; flex: none; height: 29px; font-size: 12px; letter-spacing: .08px; }
.tk { height: 29px; flex: none; border: 1px solid #3f3f3f; border-radius: 4px; background: linear-gradient(#2a2a2a, #1a1a1a); display: flex; align-items: center; gap: 2px; padding-left: 4px; overflow: hidden; white-space: nowrap; }
.tk span { padding-top: 2px; }
.tk svg { flex: none; }
.first-task { border-right: 0; border-radius: 4px 0 0 4px; }
.w182 { width: 182px; }
.act { width: 225px; background: #111; border: 2px solid #2f7fd0; padding-left: 0; gap: 4px; }
.last { margin-left: 0; padding-left: 0; border-left: 0; border-radius: 0 4px 4px 0; }
.last span { margin-left: -3px; }
.tray { margin-left: auto; display: flex; align-items: center; width: 340px; flex: none; }
.clock { width: 70px; flex: none; display: flex; flex-direction: column; align-items: center; color: #bdbdbd; }
.time { font: 14px/17px "Liberation Sans", sans-serif; }
.date { font-size: 9.5px; line-height: 13px; letter-spacing: .5px; }
```
